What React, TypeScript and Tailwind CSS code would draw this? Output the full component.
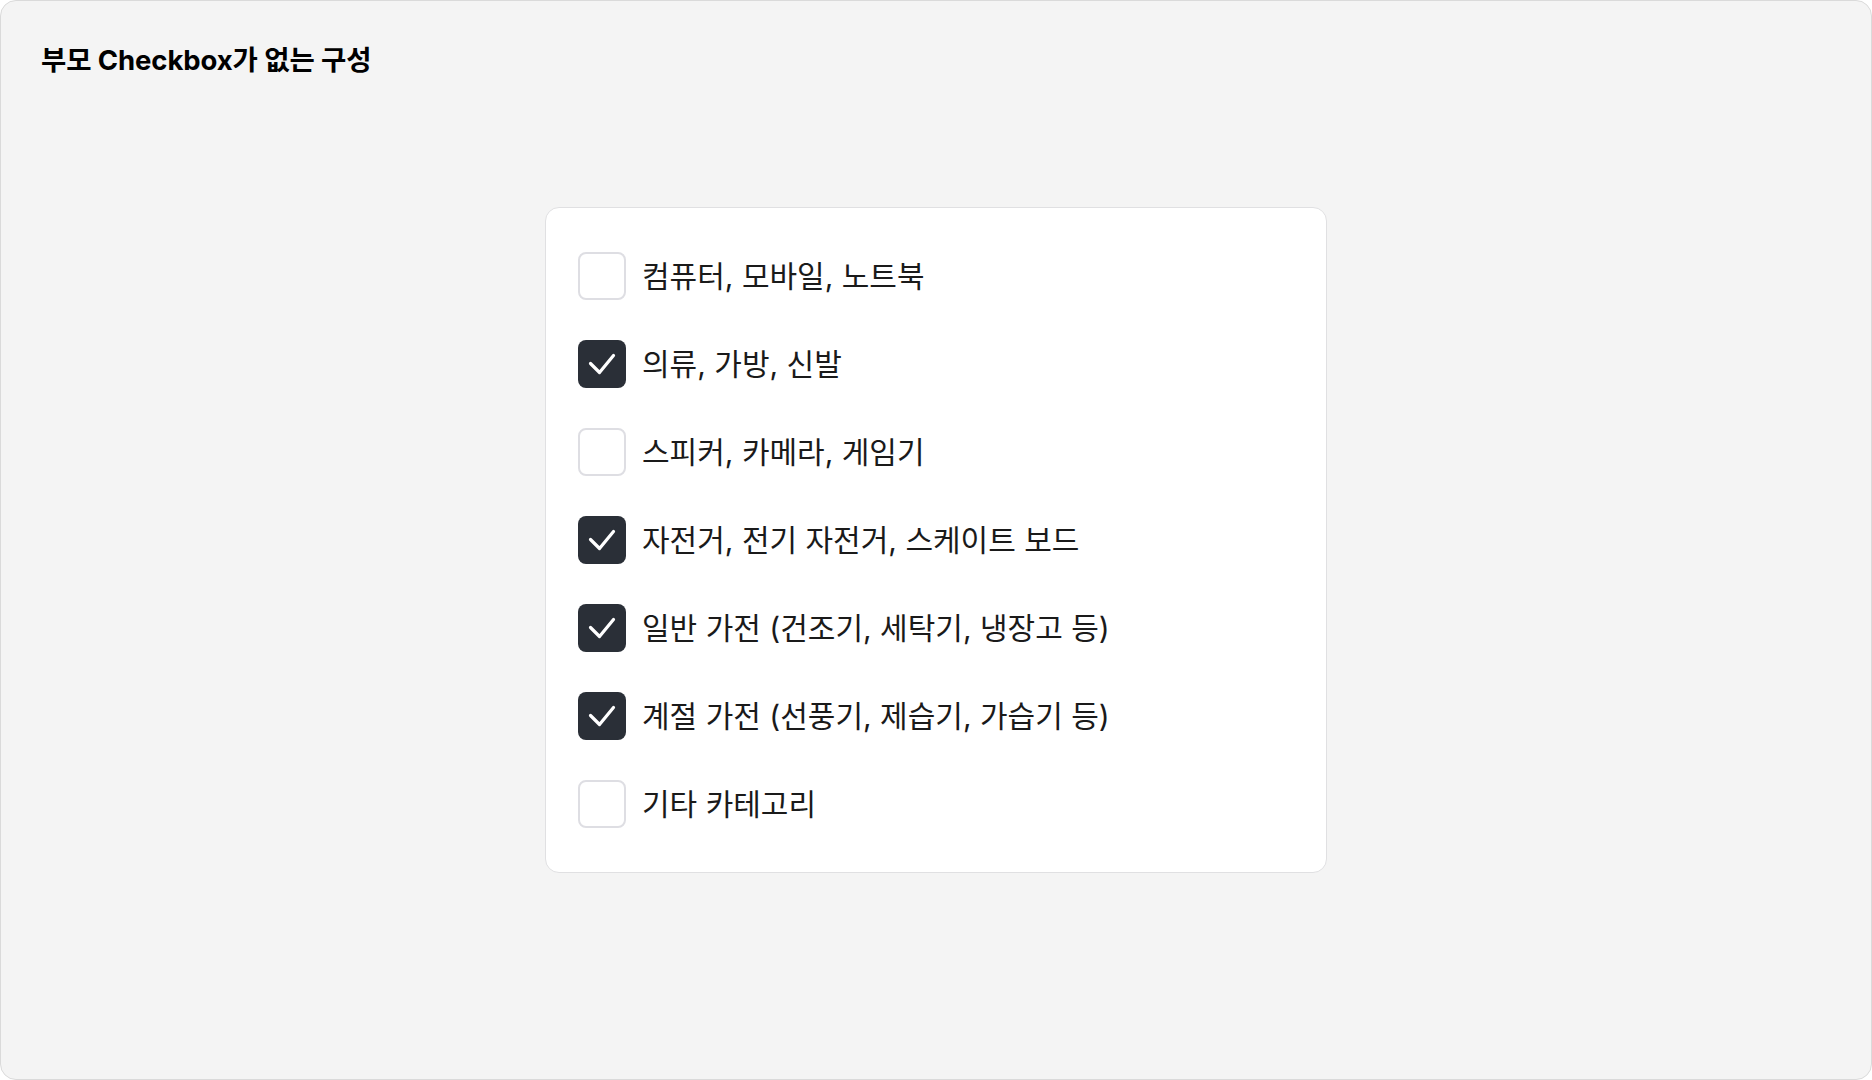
import React, { useState } from "react";

const items = [
  { label: "컴퓨터, 모바일, 노트북", checked: false },
  { label: "의류, 가방, 신발", checked: true },
  { label: "스피커, 카메라, 게임기", checked: false },
  { label: "자전거, 전기 자전거, 스케이트 보드", checked: true },
  { label: "일반 가전 (건조기, 세탁기, 냉장고 등)", checked: true },
  { label: "계절 가전 (선풍기, 제습기, 가습기 등)", checked: true },
  { label: "기타 카테고리", checked: false },
];

const CheckIcon = () => (
  <svg width="48" height="48" viewBox="0 0 48 48" fill="none">
    <path
      d="M12.5 23.5 L21.5 32.5 L35.5 15.5"
      stroke="white"
      strokeWidth="3.2"
      strokeLinecap="round"
      strokeLinejoin="round"
    />
  </svg>
);

export default function App() {
  const [state, setState] = useState(items.map((i) => i.checked));

  return (
    <div
      className="w-[1872px] h-[1080px] bg-[#f4f4f4] border border-[#dadada] rounded-[16px] px-10 pt-[41px] text-[#222]"
      style={{ fontFamily: 'Inter, "Noto Sans CJK KR", sans-serif' }}
    >
      <h1 className="text-[27.5px] leading-[36px] font-bold text-black tracking-[-0.1px]">
        부모 Checkbox가 없는 구성
      </h1>
      <div className="mt-[129px] mx-auto w-[782px] bg-white border border-[#e0e0e2] rounded-[14px] px-8 py-[44px] flex flex-col gap-10">
        {items.map((item, i) => (
          <label key={i} className="flex items-center gap-4 h-12 cursor-pointer">
            <button
              type="button"
              onClick={() =>
                setState((s) => s.map((v, j) => (j === i ? !v : v)))
              }
              className={
                state[i]
                  ? "w-12 h-12 rounded-[8px] bg-[#2a2f37] flex items-center justify-center shrink-0"
                  : "w-12 h-12 rounded-[8px] bg-white border-2 border-[#dedee3] shrink-0"
              }
            >
              {state[i] && <CheckIcon />}
            </button>
            <span className="text-[30px] leading-[40px] text-[#1a1a1a]">
              {item.label}
            </span>
          </label>
        ))}
      </div>
    </div>
  );
}
